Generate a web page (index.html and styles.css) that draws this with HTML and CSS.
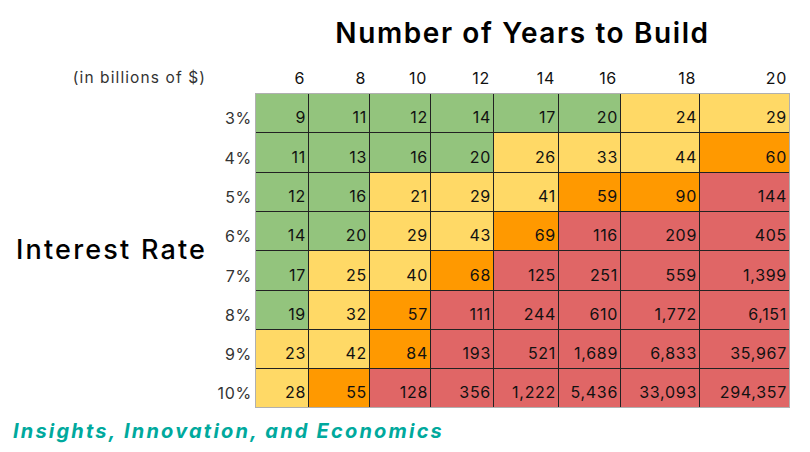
FILE: index.html
```html
<!DOCTYPE html>
<html lang="en">
<head>
<meta charset="utf-8">
<title>Interest Rate vs Years to Build</title>
<link rel="stylesheet" href="styles.css">
</head>
<body>
<div class="page">
  <div class="chart">
    <h1 class="title">Number of Years to Build</h1>
    <div class="units">(in billions of $)</div>
    <div class="col-heads">
      <span>6</span><span>8</span><span>10</span><span>12</span><span>14</span><span>16</span><span>18</span><span>20</span>
    </div>
    <div class="axis-label">Interest Rate</div>
    <div class="row-heads">
      <span>3%</span><span>4%</span><span>5%</span><span>6%</span><span>7%</span><span>8%</span><span>9%</span><span>10%</span>
    </div>
    <div class="grid">
      <span class="g">9</span><span class="g">11</span><span class="g">12</span><span class="g">14</span><span class="g">17</span><span class="g">20</span><span class="y">24</span><span class="y">29</span>
      <span class="g">11</span><span class="g">13</span><span class="g">16</span><span class="g">20</span><span class="y">26</span><span class="y">33</span><span class="y">44</span><span class="o">60</span>
      <span class="g">12</span><span class="g">16</span><span class="y">21</span><span class="y">29</span><span class="y">41</span><span class="o">59</span><span class="o">90</span><span class="r">144</span>
      <span class="g">14</span><span class="g">20</span><span class="y">29</span><span class="y">43</span><span class="o">69</span><span class="r">116</span><span class="r">209</span><span class="r">405</span>
      <span class="g">17</span><span class="y">25</span><span class="y">40</span><span class="o">68</span><span class="r">125</span><span class="r">251</span><span class="r">559</span><span class="r">1,399</span>
      <span class="g">19</span><span class="y">32</span><span class="o">57</span><span class="r">111</span><span class="r">244</span><span class="r">610</span><span class="r">1,772</span><span class="r">6,151</span>
      <span class="y">23</span><span class="y">42</span><span class="o">84</span><span class="r">193</span><span class="r">521</span><span class="r">1,689</span><span class="r">6,833</span><span class="r">35,967</span>
      <span class="y">28</span><span class="o">55</span><span class="r">128</span><span class="r">356</span><span class="r">1,222</span><span class="r">5,436</span><span class="r">33,093</span><span class="r">294,357</span>
    </div>
  </div>
  <div class="footer">Insights, Innovation, and Economics</div>
</div>
</body>
</html>
```

FILE: styles.css
```css
html, body {
  margin: 0;
  padding: 0;
  background: #ffffff;
}
body {
  width: 810px;
  height: 452px;
  overflow: hidden;
  font-family: Inter, "DejaVu Sans", sans-serif;
  color: #1a1a1a;
}
.page {
  padding: 14px 0 0 0;
}
.chart {
  display: grid;
  grid-template-columns: 213px 42px 535px;
  grid-template-rows: 41px 38px auto;
}
.title {
  grid-column: 3;
  grid-row: 1;
  margin: 0;
  text-align: center;
  font-size: 28px;
  font-weight: 600;
  line-height: 38px;
  letter-spacing: 1.6px;
  color: #000;
}
.units {
  grid-column: 1 / 3;
  grid-row: 2;
  justify-self: end;
  margin-right: 49px;
  font-size: 15.5px;
  line-height: 20px;
  padding-top: 13px;
  letter-spacing: 1.1px;
  color: #333;
}
.col-heads {
  grid-column: 3;
  grid-row: 2;
  display: grid;
  grid-template-columns: 53px 61px 61px 63px 65px 62px 79px 91px;
  font-size: 16px;
  line-height: 20px;
  padding-top: 13px;
  letter-spacing: 0.7px;
  color: #111;
}
.col-heads span {
  text-align: right;
  padding-right: 3px;
}
.axis-label {
  grid-column: 1;
  grid-row: 3;
  align-self: center;
  padding-left: 16px;
  font-size: 27px;
  font-weight: 500;
  letter-spacing: 2.2px;
  color: #000;
  margin-top: -2px;
}
.row-heads {
  grid-column: 2;
  grid-row: 3;
  display: grid;
  grid-template-rows: 39px 40px 39px 39px 40px 39px 39px 39px;
  padding-top: 1px;
  font-size: 16px;
  letter-spacing: 0.7px;
  color: #333;
}
.row-heads span {
  text-align: right;
  padding-right: 3px;
  align-self: end;
  line-height: 20px;
  padding-bottom: 5px;
}
.grid {
  grid-column: 3;
  grid-row: 3;
  display: grid;
  grid-template-columns: 52px 60px 60px 62px 64px 61px 78px 89px;
  grid-template-rows: 38px 39px 38px 38px 39px 38px 38px 38px;
  gap: 1px;
  background: #222;
  border: 1px solid #b0b0b0;
  width: 533px;
  font-size: 16px;
  letter-spacing: 0.7px;
  color: #111;
}
.grid span {
  display: flex;
  align-items: flex-end;
  justify-content: flex-end;
  padding: 0 2px 5px 0;
  line-height: 20px;
}
.g { background: #93c47d; }
.y { background: #ffd966; }
.o { background: #ff9900; }
.r { background: #e06666; }
.footer {
  padding: 11px 0 0 13px;
  font-size: 20px;
  font-weight: 700;
  font-style: italic;
  letter-spacing: 2.2px;
  color: #00a99d;
}
```
